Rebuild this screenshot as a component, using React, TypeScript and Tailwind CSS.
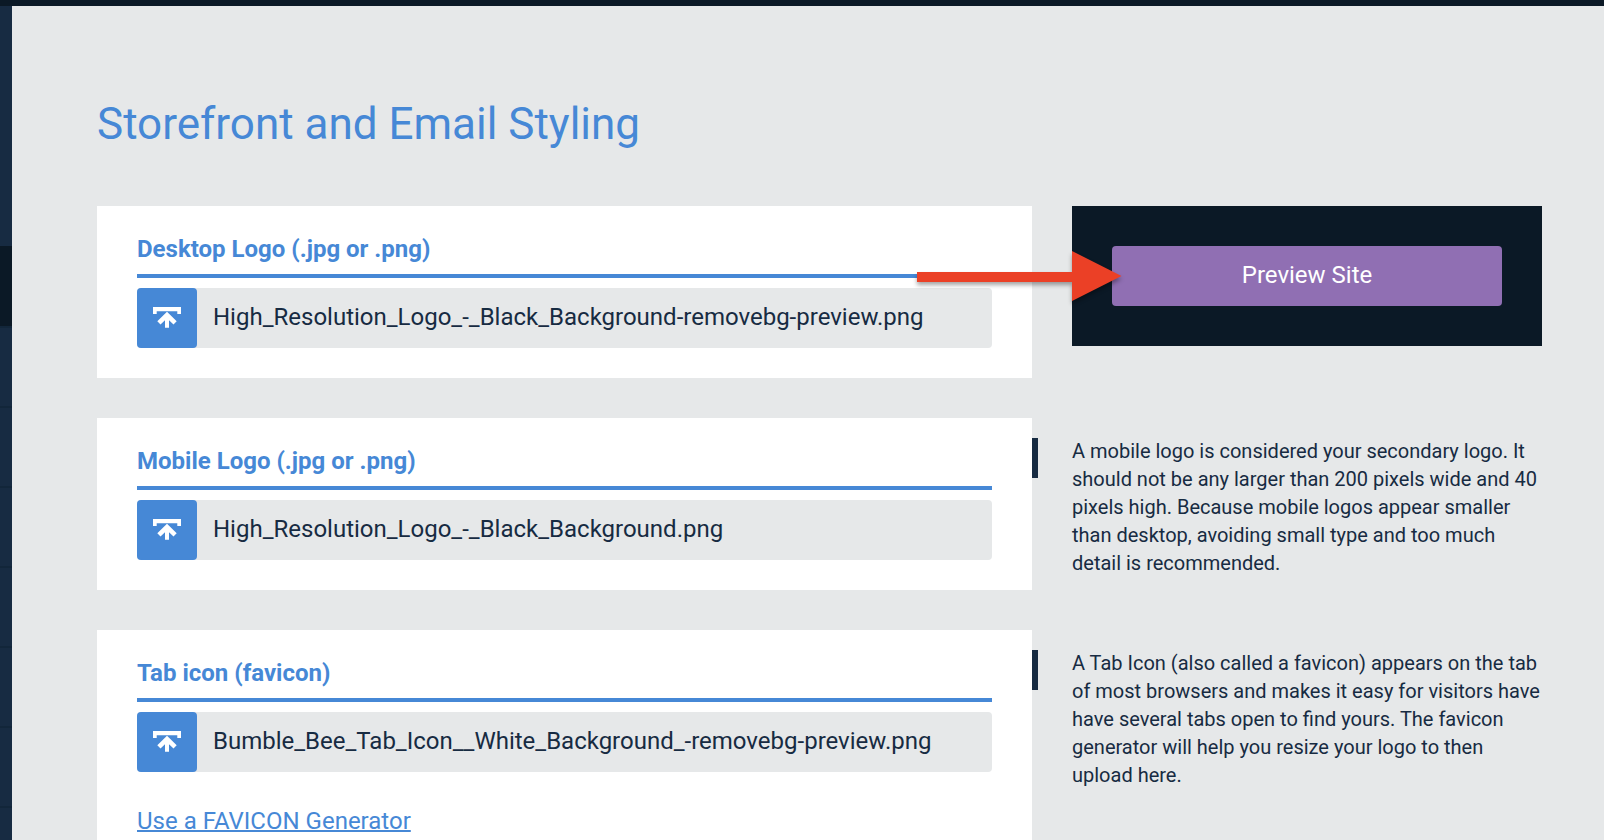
import type { ReactNode } from "react";

function UploadIcon() {
  return (
    <svg width="28" height="22" viewBox="0 0 28 22" fill="white" aria-hidden="true">
      <path d="M0 0H28V7H24.300V4.300H3.700V7H0Z" />
      <path d="M14 4.800L23.700 14.200L20.500 17.600L16 13.300V20.700H12V13.300L7.500 17.600L4.300 14.200Z" />
    </svg>
  );
}

function Arrow() {
  return (
    <svg
      className="pointer-events-none absolute top-10 -left-[155px] drop-shadow-[0_3px_2px_rgba(0,0,0,0.35)]"
      width="206"
      height="60"
      viewBox="0 0 206 60"
      aria-hidden="true"
    >
      <path d="M0 26H155V5L204.500 30L155 55V36H0Z" fill="#eb4026" />
    </svg>
  );
}

type CardProps = { id: string; title: string; file: string; children?: ReactNode };

function UploadCard({ id, title, file, children }: CardProps) {
  return (
    <section className="bg-white px-10 pt-[25px] pb-[30px]">
      <label
        htmlFor={id}
        className="block border-b-4 border-[#4688d6] pb-[7px] text-2xl leading-9 font-bold text-[#4688d6]"
      >
        {title}
      </label>
      <div className="mt-2.5 flex h-15 rounded bg-[#e6e8e9]">
        <button
          type="button"
          aria-label="Upload file"
          className="flex w-15 shrink-0 items-center justify-center rounded bg-[#4688d6]"
        >
          <UploadIcon />
        </button>
        <input
          id={id}
          type="text"
          readOnly
          defaultValue={file}
          className="min-w-0 flex-1 bg-transparent px-4 pb-0.5 text-2xl text-[#172b42] outline-none"
        />
      </div>
      {children}
    </section>
  );
}

function Note({ children }: { children: ReactNode }) {
  return (
    <aside className="relative pt-[19px]">
      <span className="absolute top-5 -left-10 h-10 w-1.5 bg-[#172b42]" />
      <p className="text-xl leading-7 text-[#172b42]">{children}</p>
    </aside>
  );
}

const menuRows = [0, 1, 2, 3, 4, 5, 6];

export default function App() {
  return (
    <div className="flex h-screen flex-col overflow-hidden bg-[#e6e8e9] font-[Roboto,sans-serif]">
      <header className="h-1.5 shrink-0 bg-[#0b1926]" />
      <div className="flex min-h-0 flex-1">
        <nav className="w-3 shrink-0 overflow-hidden bg-[#172b42]">
          <div className="h-60" />
          <div className="h-20 bg-[#0b1926]" />
          {menuRows.map((row) => (
            <div key={row} className="h-20 border-t-2 border-[#12263a]" />
          ))}
        </nav>
        <main className="min-w-0 flex-1 overflow-hidden pt-[90px] pr-[62px] pl-[85px]">
          <h1 className="text-[44px] leading-14 text-[#4688d6]">Storefront and Email Styling</h1>
          <div className="mt-[54px] grid grid-cols-[935fr_470fr] gap-10">
            <UploadCard
              id="desktop-logo"
              title="Desktop Logo (.jpg or .png)"
              file="High_Resolution_Logo_-_Black_Background-removebg-preview.png"
            />
            <div className="relative self-start bg-[#0b1926] p-10">
              <button
                type="button"
                className="h-15 w-full rounded bg-[#906fb3] pb-0.5 text-2xl text-white"
              >
                Preview Site
              </button>
              <Arrow />
            </div>
            <UploadCard
              id="mobile-logo"
              title="Mobile Logo (.jpg or .png)"
              file="High_Resolution_Logo_-_Black_Background.png"
            />
            <Note>
              A mobile logo is considered your secondary logo. It should not be any larger than 200
              pixels wide and 40 pixels high. Because mobile logos appear smaller than desktop,
              avoiding small type and too much detail is recommended.
            </Note>
            <UploadCard
              id="tab-icon"
              title="Tab icon (favicon)"
              file="Bumble_Bee_Tab_Icon__White_Background_-removebg-preview.png"
            >
              <a
                href="#favicon-generator"
                className="mt-[31px] inline-block text-2xl leading-9 text-[#4688d6] underline decoration-2"
              >
                Use a FAVICON Generator
              </a>
            </UploadCard>
            <Note>
              A Tab Icon (also called a favicon) appears on the tab of most browsers and makes it
              easy for visitors have have several tabs open to find yours. The favicon generator
              will help you resize your logo to then upload here.
            </Note>
          </div>
        </main>
      </div>
    </div>
  );
}
